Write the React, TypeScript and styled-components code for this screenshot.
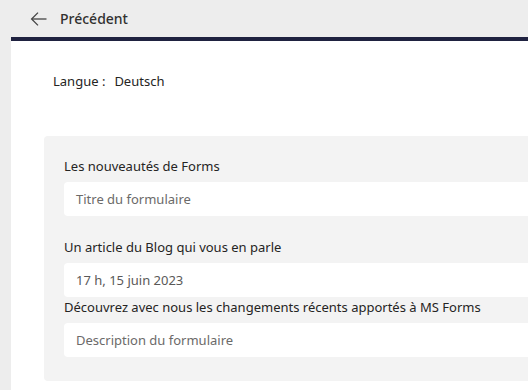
import React from 'react';
import styled, { createGlobalStyle } from 'styled-components';

const GlobalStyle = createGlobalStyle`
    html, body {
        margin: 0;
        padding: 0;
        background: #ededed;
        overflow: hidden;
    }
    body {
        font-family: "Segoe UI", "Noto Sans", "Open Sans", sans-serif;
        color: #252423;
    }
`;

const Page = styled.div`
    width: 760px;
    height: 390px;
    display: flex;
    flex-direction: column;
`;

const Header = styled.header`
    height: 37px;
    display: flex;
    align-items: center;
    padding-left: 30px;
    gap: 12px;
`;

const BackIcon = styled.svg`
    width: 18px;
    height: 18px;
    color: #444;
`;

const BackLabel = styled.span`
    font-size: 14px;
    font-weight: 500;
    color: #323130;
`;

const Panel = styled.main`
    flex: 1;
    margin-left: 11px;
    background: #fff;
    border-top: 4px solid #1f2240;
    padding: 29px 0 0 33px;
`;

const LangRow = styled.div`
    display: flex;
    gap: 9px;
    font-size: 13px;
    line-height: 22px;
    padding-left: 9px;
    color: #252423;
`;

const Card = styled.section`
    margin-top: 44px;
    background: #f3f3f3;
    border-radius: 4px;
    padding: 20px 20px 24px 20px;
    display: flex;
    flex-direction: column;
`;

const Label = styled.div<{ $gap?: number }>`
    font-size: 13px;
    line-height: 20px;
    margin-top: ${p => p.$gap ?? 0}px;
    margin-bottom: 6px;
    color: #252423;
`;

const Field = styled.div<{ $filled?: boolean }>`
    height: 34px;
    background: #fff;
    border-radius: 4px;
    display: flex;
    align-items: center;
    padding-left: 12px;
    padding-bottom: 1px;
    box-sizing: border-box;
    font-size: 13px;
    color: ${p => p.$filled ? '#5a5958' : '#6b6a69'};
`;

const App = () => {
    return (
        <>
            <GlobalStyle />
            <Page>
                <Header>
                    <BackIcon viewBox="0 0 18 18" fill="none" stroke="currentColor" strokeWidth="1.3">
                        <path d="M16.5 9H1.8" />
                        <path d="M8 2.6L1.6 9L8 15.4" />
                    </BackIcon>
                    <BackLabel>Précédent</BackLabel>
                </Header>
                <Panel>
                    <LangRow>
                        <span>Langue :</span>
                        <span>Deutsch</span>
                    </LangRow>
                    <Card>
                        <Label>Les nouveautés de Forms</Label>
                        <Field>Titre du formulaire</Field>
                        <Label $gap={21}>Un article du Blog qui vous en parle</Label>
                        <Field $filled>17 h, 15 juin 2023</Field>
                        <Label>Découvrez avec nous les changements récents apportés à MS Forms</Label>
                        <Field>Description du formulaire</Field>
                    </Card>
                </Panel>
            </Page>
        </>
    );
}

export default App;
